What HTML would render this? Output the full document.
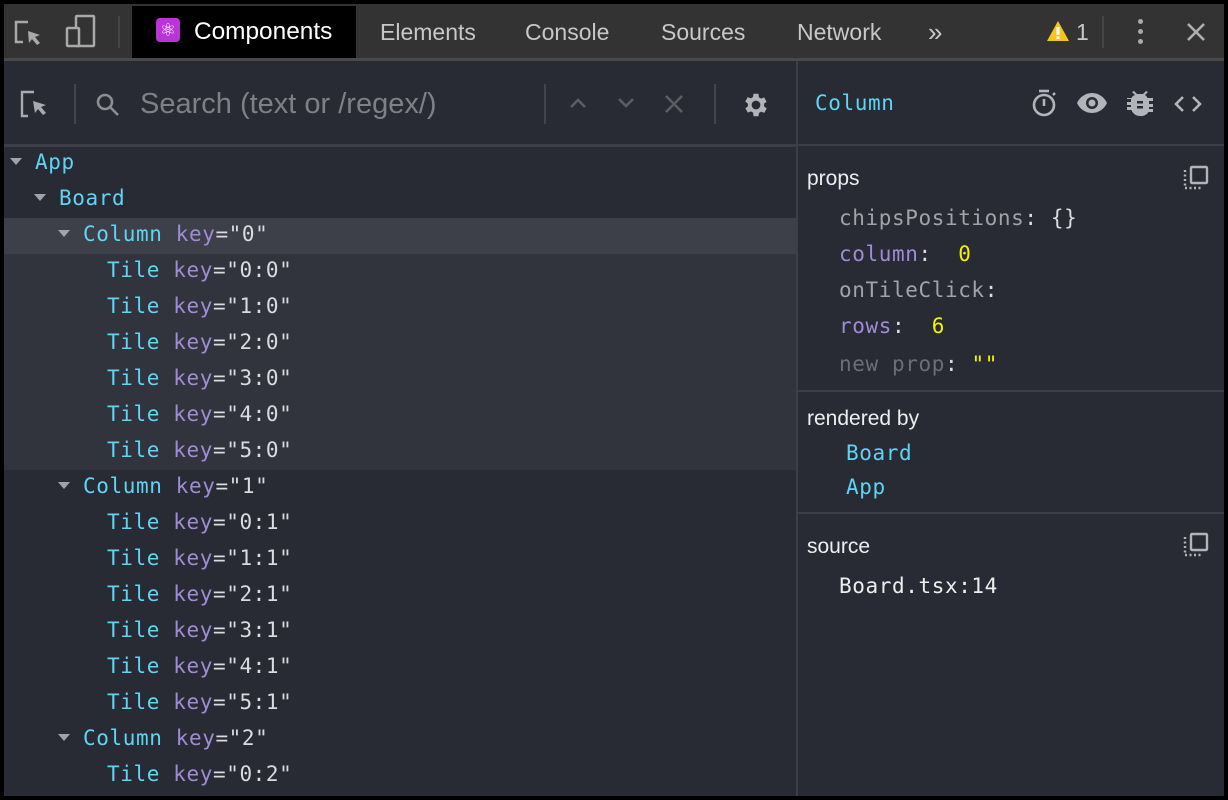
<!DOCTYPE html>
<html><head><meta charset="utf-8"><style>
*{margin:0;padding:0;box-sizing:border-box}
body{width:1228px;height:800px;background:#000;overflow:hidden;position:relative;font-family:"Liberation Sans",sans-serif}
.a{position:absolute}
.mono{font-family:"DejaVu Sans Mono","Liberation Mono",monospace;font-size:21px;white-space:pre;letter-spacing:0.6px}
.c{color:#5fd4f4}.k{color:#a08bd6}.s{color:#d8dbe0}.g{color:#a0a3a9}.y{color:#f2f200}
.row{position:absolute;left:0;width:793px;height:36px;line-height:36px}
.tri{display:inline-block;width:0;height:0;border-left:6px solid transparent;border-right:6px solid transparent;border-top:7px solid #a0a3a9;vertical-align:middle;margin-right:13px;position:relative;top:-2px}
.tab{position:absolute;top:6px;height:52px;line-height:52px;font-size:23px;color:#c8c8c8}
</style></head><body>
<div class="a" style="left:4px;top:4px;width:1220px;height:54px;background:#333333"></div>
<div class="a" style="left:4px;top:58px;width:1220px;height:3px;background:#494949"></div>
<svg class="a" style="left:12px;top:18px" width="32" height="32" viewBox="0 0 32 32" fill="none" stroke="#a9a9a9" stroke-width="2.5"><path d="M16 4H4v20h7"/><path d="M16 13l12 4-5 2 5 6-3 2-5-6-3 4z" fill="#a9a9a9" stroke="none"/></svg>
<svg class="a" style="left:64px;top:14px" width="34" height="36" viewBox="0 0 34 36" fill="none" stroke="#a9a9a9" stroke-width="2.5"><rect x="12" y="2" width="18" height="30" rx="1"/><rect x="3" y="14" width="12" height="18" rx="1" fill="#333"/></svg>
<div class="a" style="left:118px;top:16px;width:2px;height:32px;background:#454545"></div>
<div class="a" style="left:132px;top:6px;width:224px;height:52px;background:#000"></div>
<div class="a" style="left:156px;top:18px;width:24px;height:24px;background:#b935d8;border-radius:4px;color:#fff;font-size:18px;line-height:24px;text-align:center">⚛</div>
<div class="tab" style="left:194px;color:#fff;font-size:24.4px">Components</div>
<div class="tab" style="left:380px">Elements</div>
<div class="tab" style="left:525px">Console</div>
<div class="tab" style="left:661px">Sources</div>
<div class="tab" style="left:797px">Network</div>
<div class="tab" style="left:928px;font-size:26px">»</div>
<svg class="a" style="left:1046px;top:20px" width="24" height="22" viewBox="0 0 24 22"><path d="M12 1L23 21H1z" fill="#f5c518"/><rect x="10.5" y="7" width="3" height="8" fill="#fff"/><rect x="10.5" y="16.5" width="3" height="2.5" fill="#fff"/></svg>
<div class="tab" style="left:1076px">1</div>
<div class="a" style="left:1102px;top:16px;width:2px;height:32px;background:#454545"></div>
<div class="a" style="left:1138px;top:19px;width:5px;height:5px;border-radius:50%;background:#aaa;box-shadow:0 10px 0 #aaa,0 20px 0 #aaa"></div>
<svg class="a" style="left:1186px;top:22px" width="20" height="20" viewBox="0 0 20 20" stroke="#b0b0b0" stroke-width="2.6"><path d="M2 2L18 18M18 2L2 18"/></svg>

<div class="a" style="left:4px;top:61px;width:793px;height:735px;background:#282b33"></div>
<div class="a" style="left:4px;top:144px;width:793px;height:3px;background:#3c3f47"></div>
<svg class="a" style="left:20px;top:90px" width="30" height="30" viewBox="0 0 30 30" fill="none" stroke="#a9abb0" stroke-width="2.4"><path d="M14 2H2v24h6"/><path d="M13 11l13 4-5 2 5 6-3 2-5-6-3 4z" fill="#a9abb0" stroke="none"/></svg>
<div class="a" style="left:74px;top:84px;width:2px;height:40px;background:#41444c"></div>
<svg class="a" style="left:95px;top:92px" width="26" height="26" viewBox="0 0 26 26" fill="none" stroke="#8b8e94" stroke-width="2.6"><circle cx="10" cy="10" r="7"/><path d="M15 15l8 8"/></svg>
<div class="a" style="left:140px;top:86px;font-size:29px;color:#7d8087;line-height:36px">Search (text or /regex/)</div>
<div class="a" style="left:544px;top:84px;width:2px;height:40px;background:#41444c"></div>
<svg class="a" style="left:568px;top:96px" width="20" height="14" viewBox="0 0 20 14" fill="none" stroke="#5a5d64" stroke-width="2.6"><path d="M3 11l7-7 7 7"/></svg>
<svg class="a" style="left:616px;top:96px" width="20" height="14" viewBox="0 0 20 14" fill="none" stroke="#5a5d64" stroke-width="2.6"><path d="M3 3l7 7 7-7"/></svg>
<svg class="a" style="left:664px;top:94px" width="20" height="20" viewBox="0 0 20 20" stroke="#5a5d64" stroke-width="2.6"><path d="M2 2L18 18M18 2L2 18"/></svg>
<div class="a" style="left:714px;top:84px;width:2px;height:40px;background:#41444c"></div>
<svg class="a" style="left:741px;top:90px" width="30" height="30" viewBox="0 0 24 24"><path fill="#b2b4b9" d="M19.4 13a7.5 7.5 0 000-2l2.1-1.6-2-3.5-2.5 1a7.3 7.3 0 00-1.7-1L15 3h-4l-.4 2.7a7.3 7.3 0 00-1.7 1l-2.5-1-2 3.5L6.6 11a7.5 7.5 0 000 2l-2.1 1.6 2 3.5 2.5-1a7.3 7.3 0 001.7 1L11 21h4l.4-2.7a7.3 7.3 0 001.7-1l2.5 1 2-3.5zM13 15.5a3.5 3.5 0 110-7 3.5 3.5 0 010 7z" transform="translate(-1 0)"/></svg>

<div class="a" style="left:4px;top:218px;width:793px;height:36px;background:#3d4048"></div>
<div class="a" style="left:4px;top:254px;width:793px;height:216px;background:#31343c"></div>

<div class="mono">
<div class="row" style="top:144px;left:10px"><span class="tri"></span><span class="c">App</span></div>
<div class="row" style="top:180px;left:34px"><span class="tri"></span><span class="c">Board</span></div>
<div class="row" style="top:216px;left:58px"><span class="tri"></span><span class="c">Column </span><span class="k">key</span><span class="s">="0"</span></div>
<div class="row" style="top:252px;left:107px"><span class="c">Tile </span><span class="k">key</span><span class="s">="0:0"</span></div>
<div class="row" style="top:288px;left:107px"><span class="c">Tile </span><span class="k">key</span><span class="s">="1:0"</span></div>
<div class="row" style="top:324px;left:107px"><span class="c">Tile </span><span class="k">key</span><span class="s">="2:0"</span></div>
<div class="row" style="top:360px;left:107px"><span class="c">Tile </span><span class="k">key</span><span class="s">="3:0"</span></div>
<div class="row" style="top:396px;left:107px"><span class="c">Tile </span><span class="k">key</span><span class="s">="4:0"</span></div>
<div class="row" style="top:432px;left:107px"><span class="c">Tile </span><span class="k">key</span><span class="s">="5:0"</span></div>
<div class="row" style="top:468px;left:58px"><span class="tri"></span><span class="c">Column </span><span class="k">key</span><span class="s">="1"</span></div>
<div class="row" style="top:504px;left:107px"><span class="c">Tile </span><span class="k">key</span><span class="s">="0:1"</span></div>
<div class="row" style="top:540px;left:107px"><span class="c">Tile </span><span class="k">key</span><span class="s">="1:1"</span></div>
<div class="row" style="top:576px;left:107px"><span class="c">Tile </span><span class="k">key</span><span class="s">="2:1"</span></div>
<div class="row" style="top:612px;left:107px"><span class="c">Tile </span><span class="k">key</span><span class="s">="3:1"</span></div>
<div class="row" style="top:648px;left:107px"><span class="c">Tile </span><span class="k">key</span><span class="s">="4:1"</span></div>
<div class="row" style="top:684px;left:107px"><span class="c">Tile </span><span class="k">key</span><span class="s">="5:1"</span></div>
<div class="row" style="top:720px;left:58px"><span class="tri"></span><span class="c">Column </span><span class="k">key</span><span class="s">="2"</span></div>
<div class="row" style="top:756px;left:107px"><span class="c">Tile </span><span class="k">key</span><span class="s">="0:2"</span></div>
</div>

<div class="a" style="left:796px;top:61px;width:2px;height:735px;background:#3c3f47"></div>
<div class="a" style="left:798px;top:61px;width:426px;height:735px;background:#282b33"></div>
<div class="a" style="left:798px;top:144px;width:426px;height:2px;background:#3c3f47"></div>
<div class="a" style="left:798px;top:390px;width:426px;height:2px;background:#3c3f47"></div>
<div class="a" style="left:798px;top:512px;width:426px;height:2px;background:#3c3f47"></div>
<div class="a mono c" style="left:815px;top:88px;line-height:30px">Column</div>
<svg class="a" style="left:1030px;top:88px" width="28" height="30" viewBox="0 0 28 30" fill="none" stroke="#b2b4b9" stroke-width="2.6"><path d="M9 3h10"/><circle cx="14" cy="17" r="10"/><path d="M14 11v7"/><path d="M23 7l2-2"/></svg>
<svg class="a" style="left:1076px;top:91px" width="32" height="24" viewBox="0 0 32 24"><path fill="#b2b4b9" d="M16 2C9 2 3.5 6.5 1 12c2.5 5.5 8 10 15 10s12.5-4.5 15-10C28.5 6.5 23 2 16 2zm0 16a6 6 0 110-12 6 6 0 010 12z"/><circle cx="16" cy="12" r="3.5" fill="#b2b4b9"/></svg>
<svg class="a" style="left:1127px;top:89px" width="26" height="28" viewBox="0 0 26 28"><path fill="#b2b4b9" d="M8 6l-3-3 2-1 3 3h6l3-3 2 1-3 3c1 .7 2 1.8 2.5 3H26v3h-4v3h4v3h-4v2h4v3h-4.5A9 9 0 0113 27a9 9 0 01-8.5-6H0v-3h4v-2H0v-3h4v-3H0V9h4.5C5 7.8 6 6.7 8 6z"/><rect x="10" y="12" width="6" height="2.5" fill="#282b33"/><rect x="10" y="17" width="6" height="2.5" fill="#282b33"/></svg>
<svg class="a" style="left:1174px;top:94px" width="28" height="20" viewBox="0 0 28 20" fill="none" stroke="#b2b4b9" stroke-width="2.6"><path d="M9 3L2 10l7 7M19 3l7 7-7 7"/></svg>

<div class="a" style="left:807px;top:164px;font-size:21px;color:#eee;line-height:30px">props</div>
<svg class="a" style="left:1182px;top:165px" width="28" height="26" viewBox="0 0 28 26" fill="none" stroke="#b2b4b9" stroke-width="2.4"><rect x="9" y="2" width="16" height="16" rx="1"/><path d="M3 5v18h18" stroke-dasharray="2 2.5"/></svg>
<div class="mono">
<div class="a" style="left:839px;top:200px;line-height:36px"><span class="g">chipsPositions</span><span class="s">: {}</span></div>
<div class="a" style="left:839px;top:236px;line-height:36px"><span class="k">column</span><span class="s">:  </span><span class="y">0</span></div>
<div class="a" style="left:839px;top:272px;line-height:36px"><span class="g">onTileClick</span><span class="s">:</span></div>
<div class="a" style="left:839px;top:308px;line-height:36px"><span class="k">rows</span><span class="s">:  </span><span class="y">6</span></div>
<div class="a" style="left:839px;top:346px;line-height:36px"><span style="color:#6b6e74">new prop</span><span class="s">: </span><span class="y">""</span></div>
</div>
<div class="a" style="left:807px;top:404px;font-size:21px;color:#eee;line-height:30px">rendered by</div>
<div class="a mono c" style="left:846px;top:436px;line-height:34px">Board</div>
<div class="a mono c" style="left:846px;top:470px;line-height:34px">App</div>
<div class="a" style="left:807px;top:532px;font-size:21px;color:#eee;line-height:30px">source</div>
<svg class="a" style="left:1182px;top:532px" width="28" height="26" viewBox="0 0 28 26" fill="none" stroke="#b2b4b9" stroke-width="2.4"><rect x="9" y="2" width="16" height="16" rx="1"/><path d="M3 5v18h18" stroke-dasharray="2 2.5"/></svg>
<div class="a mono" style="left:839px;top:568px;line-height:36px;color:#eee">Board.tsx:14</div>
</body></html>
